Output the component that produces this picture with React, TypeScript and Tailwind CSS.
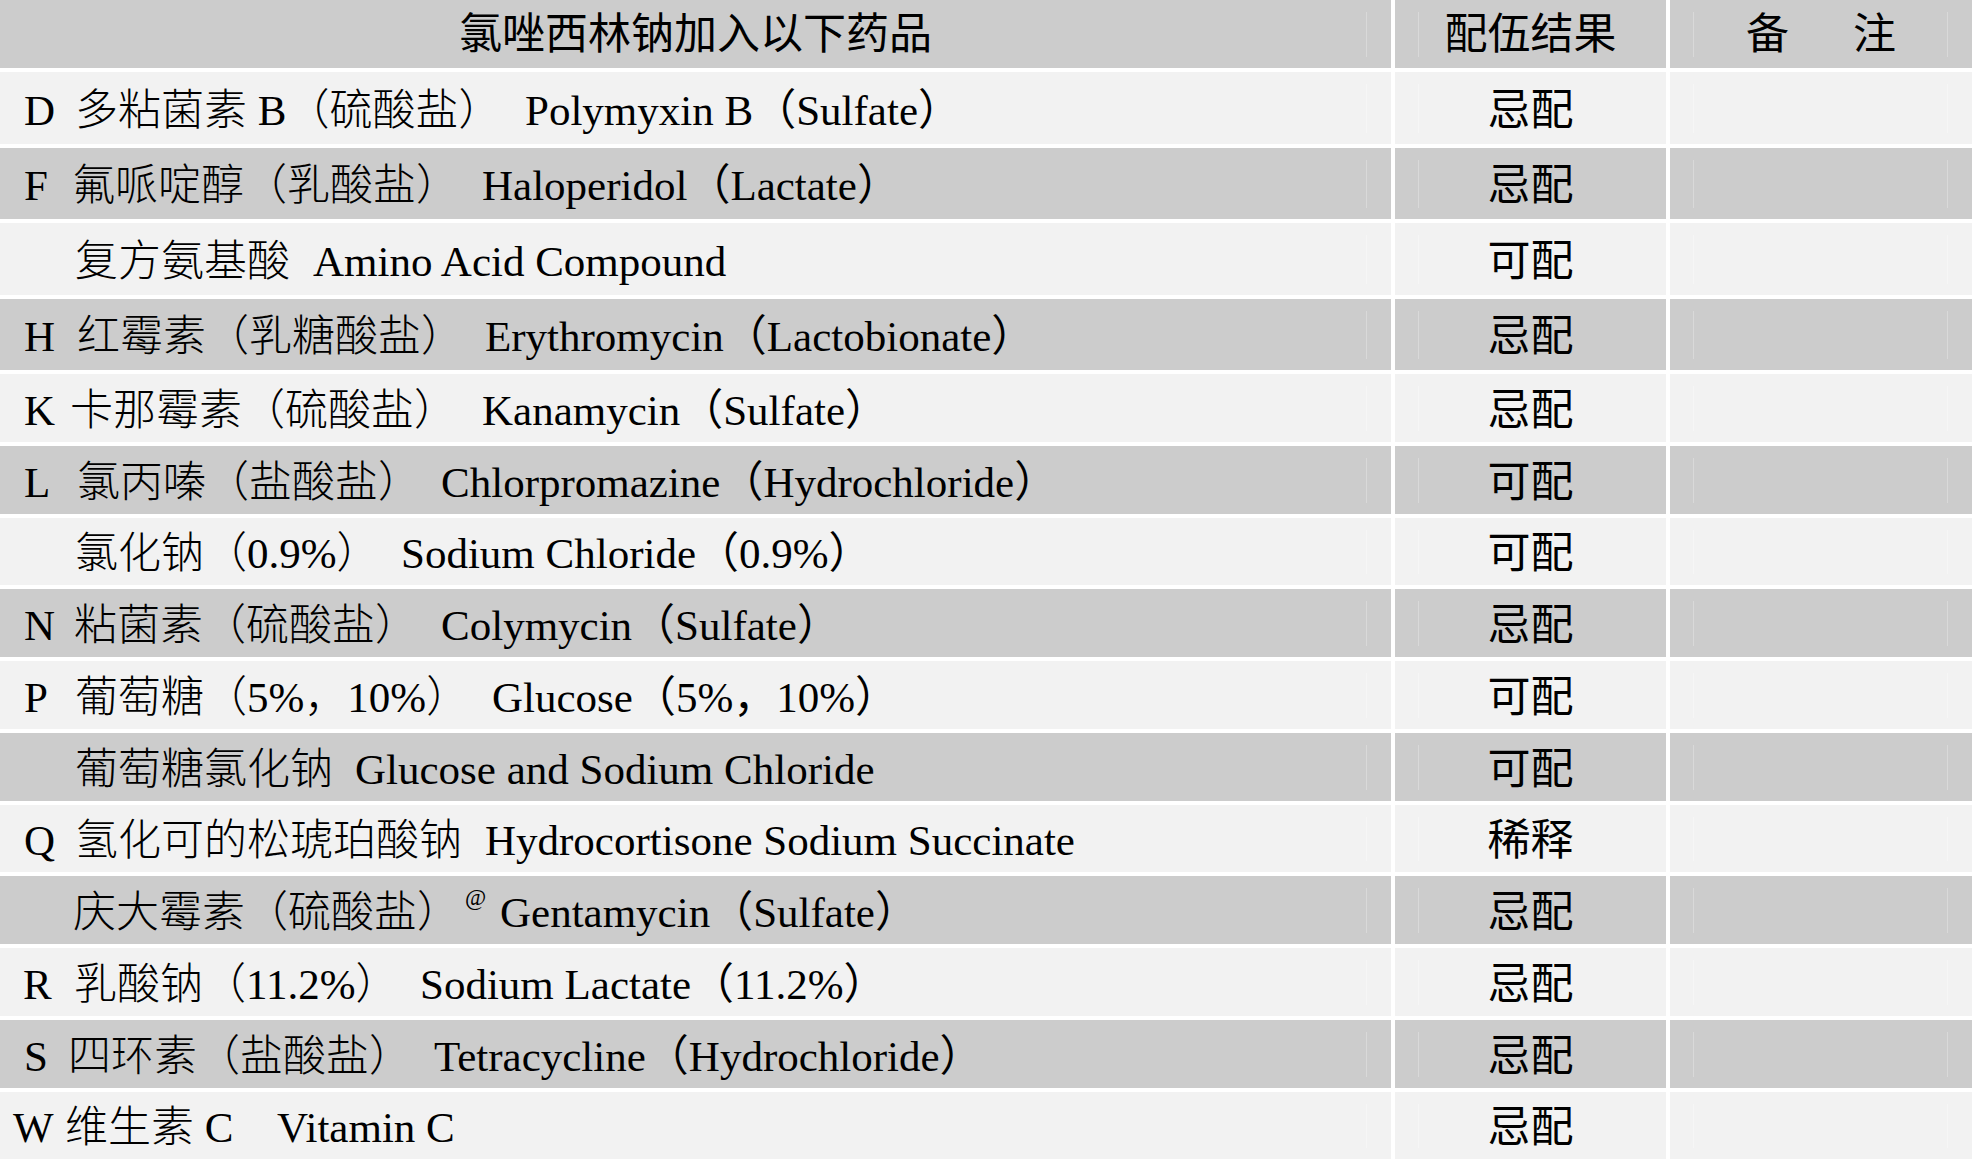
import React from "react";

/* ================= Types ================= */
type Row = {
  key: string;
  letter: string;
  lx: string; // letter padding-left
  nw: string; // where the chinese name starts
  cn: string;
  cw: string; // chinese part width, so the english text lands on its column
  sup?: string;
  en: string;
  result: string;
  h: string;
};

const rows: Row[] = [
  { key: "d", letter: "D", lx: "pl-[24px]", nw: "w-[75px]", cn: "多粘菌素 B（硫酸盐）", cw: "w-[450px]", en: "Polymyxin B（Sulfate）", result: "忌配", h: "h-[71.5px]" },
  { key: "f", letter: "F", lx: "pl-[24px]", nw: "w-[72px]", cn: "氟哌啶醇（乳酸盐）", cw: "w-[410px]", en: "Haloperidol（Lactate）", result: "忌配", h: "h-[71.5px]" },
  { key: "aa", letter: "", lx: "pl-[24px]", nw: "w-[75px]", cn: "复方氨基酸", cw: "w-[238px]", en: "Amino Acid Compound", result: "可配", h: "h-[71.5px]" },
  { key: "h", letter: "H", lx: "pl-[24px]", nw: "w-[77px]", cn: "红霉素（乳糖酸盐）", cw: "w-[408px]", en: "Erythromycin（Lactobionate）", result: "忌配", h: "h-[71.5px]" },
  { key: "k", letter: "K", lx: "pl-[24px]", nw: "w-[70px]", cn: "卡那霉素（硫酸盐）", cw: "w-[412px]", en: "Kanamycin（Sulfate）", result: "忌配", h: "h-[67.75px]" },
  { key: "l", letter: "L", lx: "pl-[24px]", nw: "w-[77px]", cn: "氯丙嗪（盐酸盐）", cw: "w-[364px]", en: "Chlorpromazine（Hydrochloride）", result: "可配", h: "h-[67.75px]" },
  { key: "nacl", letter: "", lx: "pl-[24px]", nw: "w-[75px]", cn: "氯化钠（0.9%）", cw: "w-[326px]", en: "Sodium Chloride（0.9%）", result: "可配", h: "h-[67.75px]" },
  { key: "n", letter: "N", lx: "pl-[24px]", nw: "w-[74px]", cn: "粘菌素（硫酸盐）", cw: "w-[367px]", en: "Colymycin（Sulfate）", result: "忌配", h: "h-[67.75px]" },
  { key: "p", letter: "P", lx: "pl-[24px]", nw: "w-[75px]", cn: "葡萄糖（5%，10%）", cw: "w-[417px]", en: "Glucose（5%，10%）", result: "可配", h: "h-[67.75px]" },
  { key: "gs", letter: "", lx: "pl-[24px]", nw: "w-[75px]", cn: "葡萄糖氯化钠", cw: "w-[280px]", en: "Glucose and Sodium Chloride", result: "可配", h: "h-[67.75px]" },
  { key: "q", letter: "Q", lx: "pl-[24px]", nw: "w-[75px]", cn: "氢化可的松琥珀酸钠", cw: "w-[410px]", en: "Hydrocortisone Sodium Succinate", result: "稀释", h: "h-[67.75px]" },
  { key: "gm", letter: "", lx: "pl-[24px]", nw: "w-[73px]", cn: "庆大霉素（硫酸盐）", cw: "w-[427px]", sup: "@", en: "Gentamycin（Sulfate）", result: "忌配", h: "h-[67.75px]" },
  { key: "r", letter: "R", lx: "pl-[23px]", nw: "w-[74px]", cn: "乳酸钠（11.2%）", cw: "w-[346px]", en: "Sodium Lactate（11.2%）", result: "忌配", h: "h-[67.75px]" },
  { key: "s", letter: "S", lx: "pl-[24px]", nw: "w-[68px]", cn: "四环素（盐酸盐）", cw: "w-[366px]", en: "Tetracycline（Hydrochloride）", result: "忌配", h: "h-[67.75px]" },
  { key: "w", letter: "W", lx: "pl-[13px]", nw: "w-[65px]", cn: "维生素 C", cw: "w-[212px]", en: "Vitamin C", result: "忌配", h: "h-[67.75px]" },
];

/* ================= Component ================= */
export default function App() {
  return (
    <div className="min-h-screen w-full bg-white text-black font-['Liberation_Serif','Noto_Sans_CJK_SC',serif] text-[43px] leading-none">
      <div className="w-[1972px] flex flex-col gap-[4px]">
        {/* header */}
        <div className="grid grid-cols-[1391px_271px_302px] gap-x-[4px] h-[68px]">
          <Cell gray side="r" className="justify-center">
            氯唑西林钠加入以下药品
          </Cell>
          <Cell gray side="l" className="justify-center">
            配伍结果
          </Cell>
          <Cell gray side="x" className="justify-center gap-[64px]">
            <span>备</span>
            <span>注</span>
          </Cell>
        </div>

        {rows.map((r, i) => {
          const gray = i % 2 === 1;
          return (
            <div
              key={r.key}
              className={`grid grid-cols-[1391px_271px_302px] gap-x-[4px] ${r.h}`}
            >
              <Cell gray={gray} side="r" className="pt-[5px] font-light">
                <span className={`shrink-0 font-normal ${r.nw} ${r.lx}`}>{r.letter}</span>
                <span className={`shrink-0 whitespace-pre flex items-center ${r.cw}`}>
                  {r.cn}
                  {r.sup && (
                    <span className="text-[23px] relative -top-[15px] ml-[5px]">{r.sup}</span>
                  )}
                </span>
                <span className="whitespace-pre font-normal">{r.en}</span>
              </Cell>
              <Cell gray={gray} side="l" className="justify-center pt-[5px]">
                {r.result}
              </Cell>
              <Cell gray={gray} side="x" />
            </div>
          );
        })}
      </div>
    </div>
  );
}

/* ================= Cell ================= */
// faint inner rules, left over from the scanned table
function Cell({
  gray,
  side,
  className = "",
  children,
}: {
  gray?: boolean;
  side: "l" | "r" | "x";
  className?: string;
  children?: React.ReactNode;
}) {
  const bg = gray ? "bg-[#cccccc]" : "bg-[#f2f2f2]";
  const rule = gray ? "border-[#d9d9d9]" : "border-[#f6f6f6]";
  return (
    <div className={`relative flex items-center ${bg} ${className}`}>
      {(side === "r" || side === "x") && (
        <span className={`absolute right-[24px] top-[12px] bottom-[11px] border-r ${rule}`} />
      )}
      {(side === "l" || side === "x") && (
        <span className={`absolute left-[23px] top-[12px] bottom-[11px] border-l ${rule}`} />
      )}
      {children}
    </div>
  );
}
